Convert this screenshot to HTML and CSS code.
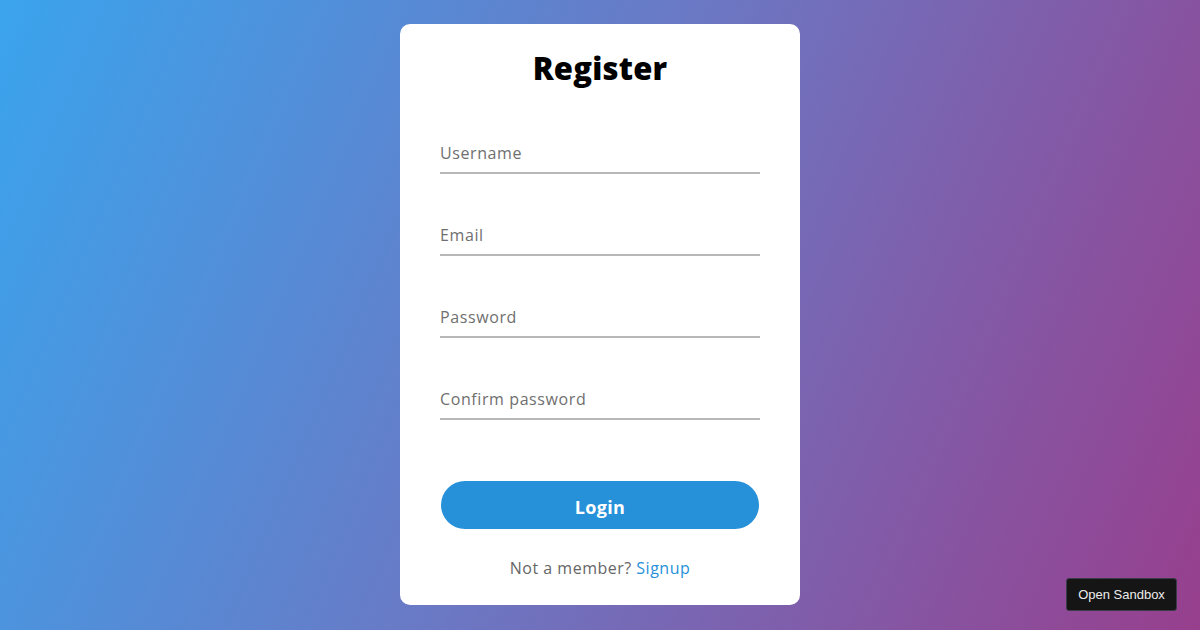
FILE: index.html
```html
<!DOCTYPE html>
<html lang="en">
<head>
<meta charset="utf-8">
<title>Register</title>
<link rel="stylesheet" href="styles.css">
</head>
<body>
  <div class="card">
    <h1 class="title">Register</h1>
    <div class="fields">
      <div class="field">Username</div>
      <div class="field">Email</div>
      <div class="field">Password</div>
      <div class="field">Confirm password</div>
    </div>
    <button class="btn">Login</button>
    <p class="footer">Not a member? <a class="link" href="#">Signup</a></p>
  </div>
  <a class="sandbox" href="#">Open Sandbox</a>
</body>
</html>
```

FILE: styles.css
```css
html, body {
  margin: 0;
  padding: 0;
  height: 100%;
}
body {
  width: 1200px;
  height: 630px;
  overflow: hidden;
  background: linear-gradient(113deg, #3aa4ed 0%, #6b78c4 48%, #973f8d 100%);
  font-family: "Open Sans", "Noto Sans", sans-serif;
  position: relative;
}
.card {
  width: 320px;
  height: 557px;
  margin: 24px auto 0;
  padding: 24px 40px 0;
  background: #fff;
  border-radius: 10px;
  display: flex;
  flex-direction: column;
}
.title {
  margin: 0;
  font-size: 31px;
  line-height: 40px;
  font-weight: 800;
  color: #000;
  text-align: center;
  letter-spacing: 0.2px;
}
.fields {
  margin-top: 44px;
  display: flex;
  flex-direction: column;
  gap: 40px;
}
.field {
  height: 38px;
  padding-top: 2px;
  border-bottom: 2px solid #b8b8b8;
  display: flex;
  align-items: center;
  font-size: 16px;
  letter-spacing: 0.6px;
  color: #6f6f6f;
}
.btn {
  margin: 61px auto 0;
  width: 318px;
  height: 48px;
  border: none;
  border-radius: 24px;
  background: #2691d9;
  color: #fff;
  font-family: inherit;
  font-size: 18px;
  font-weight: 700;
  letter-spacing: 0.3px;
  padding: 3px 0 0;
}
.footer {
  margin: 29px 0 0;
  text-align: center;
  font-size: 16px;
  line-height: 20px;
  letter-spacing: 0.5px;
  color: #666;
}
.link {
  color: #2691d9;
  text-decoration: none;
}
.sandbox {
  position: absolute;
  right: 23px;
  bottom: 19px;
  width: 109px;
  height: 31px;
  display: flex;
  align-items: center;
  justify-content: center;
  background: #151515;
  border: 1px solid #3b3b4a;
  border-radius: 3px;
  color: #ececec;
  font-family: "Liberation Sans", Arial, sans-serif;
  font-size: 13px;
  text-decoration: none;
}
```
